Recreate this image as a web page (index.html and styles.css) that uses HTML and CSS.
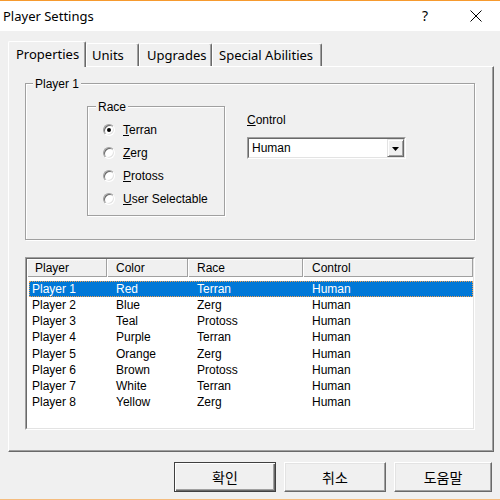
FILE: index.html
```html
<!DOCTYPE html>
<html lang="ko">
<head>
<meta charset="utf-8">
<title>Player Settings</title>
<link rel="stylesheet" href="styles.css">
</head>
<body>
<div class="screen">
  <div class="accent-top"></div>
  <div class="titlebar">
    <span class="title">Player Settings</span>
    <span class="help">?</span>
    <span class="close"><svg width="12" height="12" viewBox="0 0 12 12"><path d="M0.5 0.5L11.5 11.5M11.5 0.5L0.5 11.5" stroke="#000" stroke-width="1" fill="none"/></svg></span>
  </div>
  <div class="dialog">
    <div class="tabs">
      <div class="tab active t-props">Properties</div>
      <div class="tab t-units">Units</div>
      <div class="tab t-upg">Upgrades</div>
      <div class="tab t-spec">Special Abilities</div>
    </div>
    <div class="panel">
      <div class="group player-group">
        <div class="legend">Player 1</div>
        <div class="group-row">
          <div class="group race-group">
            <div class="legend">Race</div>
            <div class="radios">
              <div class="radio"><span class="circle checked"></span><span><u>T</u>erran</span></div>
              <div class="radio"><span class="circle"></span><span><u>Z</u>erg</span></div>
              <div class="radio"><span class="circle"></span><span><u>P</u>rotoss</span></div>
              <div class="radio"><span class="circle"></span><span><u>U</u>ser Selectable</span></div>
            </div>
          </div>
          <div class="control-col">
            <div class="label"><u>C</u>ontrol</div>
            <div class="combo">
              <div class="combo-inner">
                <span class="combo-text">Human</span>
                <span class="combo-btn"><svg width="7" height="4" viewBox="0 0 7 4"><polygon points="0,0 7,0 3.5,4" fill="#000"/></svg></span>
              </div>
            </div>
          </div>
        </div>
      </div>
      <div class="listview">
        <div class="lv-inner">
          <div class="lv-header">
            <div class="hcell h-first">Player</div>
            <div class="hcell">Color</div>
            <div class="hcell">Race</div>
            <div class="hcell">Control</div>
          </div>
          <div class="lv-rows">
            <div class="lv-row selected"><span class="c1">Player 1</span><span class="c">Red</span><span class="c">Terran</span><span class="c">Human</span></div>
            <div class="lv-row"><span class="c1">Player 2</span><span class="c">Blue</span><span class="c">Zerg</span><span class="c">Human</span></div>
            <div class="lv-row"><span class="c1">Player 3</span><span class="c">Teal</span><span class="c">Protoss</span><span class="c">Human</span></div>
            <div class="lv-row"><span class="c1">Player 4</span><span class="c">Purple</span><span class="c">Terran</span><span class="c">Human</span></div>
            <div class="lv-row"><span class="c1">Player 5</span><span class="c">Orange</span><span class="c">Zerg</span><span class="c">Human</span></div>
            <div class="lv-row"><span class="c1">Player 6</span><span class="c">Brown</span><span class="c">Protoss</span><span class="c">Human</span></div>
            <div class="lv-row"><span class="c1">Player 7</span><span class="c">White</span><span class="c">Terran</span><span class="c">Human</span></div>
            <div class="lv-row"><span class="c1">Player 8</span><span class="c">Yellow</span><span class="c">Zerg</span><span class="c">Human</span></div>
          </div>
        </div>
      </div>
    </div>
    <div class="buttons">
      <div class="btn default w1">확인</div>
      <div class="btn w2">취소</div>
      <div class="btn w3">도움말</div>
    </div>
  </div>
  <div class="accent-bottom"></div>
</div>
</body>
</html>
```
FILE: styles.css
```css
* { box-sizing: border-box; }
html, body { margin: 0; padding: 0; }
body {
  width: 500px;
  height: 500px;
  overflow: hidden;
  font-family: "Liberation Sans", Arial, sans-serif;
  font-size: 12px;
  color: #000;
  background: #f0f0f0;
}
.screen { width: 500px; height: 500px; display: flex; flex-direction: column; }
.accent-top { height: 1px; background: #f69a2e; }
.accent-bottom { height: 1px; background: #f5bc7e; }

.titlebar {
  height: 30px;
  background: #fff;
  display: flex;
  align-items: center;
  font-family: "Noto Sans", sans-serif;
  font-size: 13px;
}
.title { margin-left: 3px; }
.help { margin-left: auto; font-size: 14px; line-height: 14px; }
.close { display: flex; margin-left: 42px; margin-right: 18px; }

.dialog {
  height: 468px;
  background: #f0f0f0;
  padding: 10px 0 0 8px;
}

.tabs {
  display: flex;
  align-items: flex-end;
  height: 25px;
  font-family: "Noto Sans", sans-serif;
  font-size: 13px;
}
.tab {
  height: 23px;
  display: flex;
  align-items: center;
  border-top: 1px solid #fff;
  border-left: 1px solid #fff;
  border-right: 1px solid #696969;
  box-shadow: inset -1px 0 #a0a0a0;
  border-radius: 2px 2px 0 0;
  background: #f0f0f0;
  white-space: nowrap;
}
.tab.active {
  height: 26px;
  margin-bottom: -1px;
  padding-bottom: 2px;
  position: relative;
  z-index: 2;
}
.t-props { width: 78px; padding-left: 7px; }
.t-units { width: 53px; padding-left: 5px; }
.t-upg { width: 73px; padding-left: 7px; }
.t-spec { width: 110px; padding-left: 6px; }

.panel {
  width: 486px;
  height: 386px;
  border-top: 1px solid #fff;
  border-left: 1px solid #fff;
  border-right: 1px solid #696969;
  border-bottom: 1px solid #696969;
  box-shadow: inset -1px -1px #a0a0a0;
  padding: 16px 0 0 16px;
}

.group {
  border: 1px solid #a0a0a0;
  box-shadow: inset 1px 1px #fff, 1px 1px #fff;
}
.legend {
  width: fit-content;
  line-height: 14px;
  margin-top: -7px;
  padding: 0 2px;
  background: #f0f0f0;
}
.player-group { width: 450px; height: 157px; }
.player-group > .legend { margin-left: 7px; }
.group-row { display: flex; margin-top: 15px; }

.race-group { width: 138px; height: 110px; margin-left: 61px; }
.race-group > .legend { margin-left: 8px; }
.radios { margin-top: 4px; }
.radio {
  height: 23px;
  display: flex;
  align-items: center;
  padding-left: 15px;
}
.circle {
  width: 12px;
  height: 12px;
  border-radius: 50%;
  background: #fff;
  border: 1px solid;
  border-color: #a0a0a0 #fff #fff #a0a0a0;
  box-shadow: inset 1px 1px #696969, inset -1px -1px #e3e3e3;
  margin-right: 8px;
  display: flex;
  align-items: center;
  justify-content: center;
}
.circle.checked::after {
  content: "";
  width: 4px;
  height: 4px;
  border-radius: 50%;
  background: #000;
}

.control-col { margin-left: 22px; margin-top: 7px; }
.label { line-height: 14px; }
.combo {
  margin-top: 10px;
  width: 159px;
  height: 22px;
  border: 1px solid;
  border-color: #a0a0a0 #fff #fff #a0a0a0;
}
.combo-inner {
  height: 100%;
  border: 1px solid;
  border-color: #696969 #e3e3e3 #e3e3e3 #696969;
  background: #fff;
  display: flex;
  align-items: center;
}
.combo-text { padding-left: 3px; flex: 1; }
.combo-btn {
  width: 17px;
  height: 100%;
  background: #f0f0f0;
  border: 1px solid;
  border-color: #e3e3e3 #696969 #696969 #e3e3e3;
  box-shadow: inset 1px 1px #fff, inset -1px -1px #a0a0a0;
  display: flex;
  align-items: center;
  justify-content: center;
  padding-top: 1px;
}

.listview {
  margin-top: 17px;
  width: 450px;
  height: 173px;
  border: 1px solid;
  border-color: #a0a0a0 #fff #fff #a0a0a0;
}
.lv-inner {
  height: 100%;
  border: 1px solid;
  border-color: #696969 #e3e3e3 #e3e3e3 #696969;
  background: #fff;
}
.lv-header {
  display: grid;
  grid-template-columns: 80px 81px 115px 1fr;
  height: 18px;
  background: #f0f0f0;
  border-bottom: 1px solid #a0a0a0;
}
.hcell {
  border-right: 1px solid #a0a0a0;
  box-shadow: inset 1px 1px #fff;
  line-height: 18px;
  padding-left: 9px;
}
.hcell.h-first { padding-left: 8px; }
.lv-rows { margin-top: 4px; }
.lv-row {
  display: grid;
  grid-template-columns: 78px 81px 115px 1fr;
  height: 16.15px;
  line-height: 16px;
  margin-left: 2px;
}
.lv-row .c1 { padding-left: 3px; }
.lv-row .c { padding-left: 9px; }
.lv-row.selected {
  background: #0078d7;
  color: #fff;
  outline: 1px dotted #f0a050;
  outline-offset: -1px;
}

.buttons {
  display: flex;
  gap: 8px;
  margin-top: 10px;
  padding-left: 166px;
}
.btn {
  height: 30px;
  display: flex;
  align-items: center;
  justify-content: center;
  padding-bottom: 1px;
  font-family: "Noto Sans CJK KR", sans-serif;
  font-size: 14px;
  background: #f0f0f0;
  border: 1px solid;
  border-color: #fff #696969 #696969 #fff;
  box-shadow: inset -1px -1px #a0a0a0, inset 1px 1px #e3e3e3;
}
.btn.default {
  border: 1px solid #404040;
  box-shadow: inset 1px 1px #fff, inset -1px -1px #696969, inset -2px -2px #a0a0a0;
}
.w1 { width: 102px; }
.w2 { width: 102px; }
.w3 { width: 98px; }
```
